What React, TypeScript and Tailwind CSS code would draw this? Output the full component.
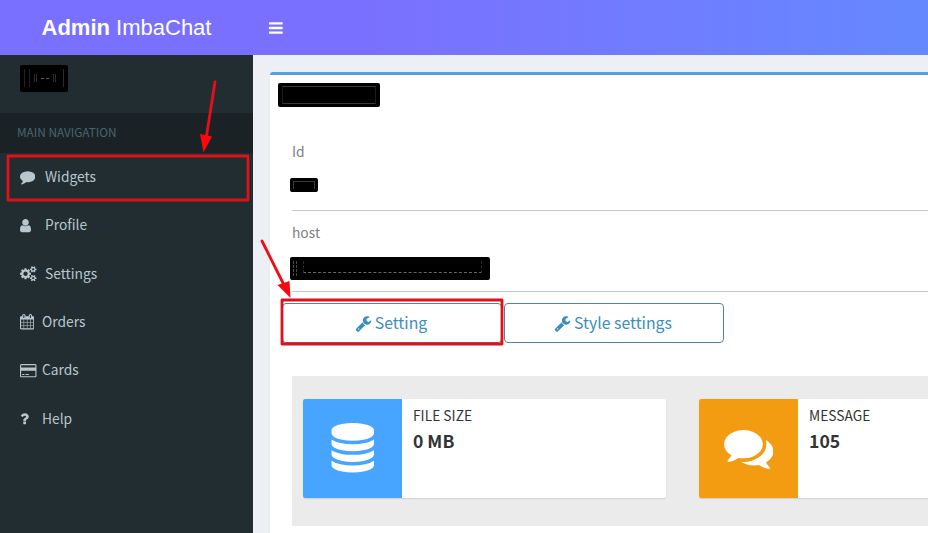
import type { ReactNode } from "react";

const ICONS = {
  bars: "M1664 1344v128q0 26-19 45t-45 19h-1408q-26 0-45-19t-19-45v-128q0-26 19-45t45-19h1408q26 0 45 19t19 45zm0-512v128q0 26-19 45t-45 19h-1408q-26 0-45-19t-19-45v-128q0-26 19-45t45-19h1408q26 0 45 19t19 45zm0-512v128q0 26-19 45t-45 19h-1408q-26 0-45-19t-19-45v-128q0-26 19-45t45-19h1408q26 0 45 19t19 45z",
  comment:
    "M1792 896q0 174-120 321.5t-326 233-450 85.5q-70 0-145-8-198 175-460 242-49 14-114 22-17 2-30.5-9t-17.5-29v-1q-3-4-.5-12t2-10 4.5-9.5l6-9 7-8.5 8-9q7-8 31-34.5t34.5-38 31-39.5 32.5-51 27-59 26-76q-157-89-247.5-220t-90.5-281q0-130 71-248.5t191-204.5 286-136.5 348-50.5 348 50.5 286 136.5 191 204.5 71 248.5z",
  user: "M1536 1399q0 109-62.5 187t-150.5 78h-854q-88 0-150.5-78t-62.5-187q0-85 8.5-160.5t31.5-152 58.5-131 94-89 134.5-34.5q131 128 313 128t313-128q76 0 134.5 34.5t94 89 58.5 131 31.5 152 8.5 160.5zm-256-887q0 159-112.5 271.5t-271.5 112.5-271.5-112.5-112.5-271.5 112.5-271.5 271.5-112.5 271.5 112.5 112.5 271.5z",
  cogs: "M896 896q0-106-75-181t-181-75-181 75-75 181 75 181 181 75 181-75 75-181zm768 512q0-52-38-90t-90-38-90 38-38 90q0 53 37.5 90.5t90.5 37.5 90.5-37.5 37.5-90.5zm0-1024q0-52-38-90t-90-38-90 38-38 90q0 53 37.5 90.5t90.5 37.5 90.5-37.5 37.5-90.5zm-384 421v185q0 10-7 19.5t-16 10.5l-155 24q-11 35-32 76 34 48 90 115 7 11 7 20 0 12-7 19-23 30-82.5 89.5t-78.5 59.5q-11 0-21-7l-115-90q-37 19-77 31-11 108-23 155-7 24-30 24h-186q-11 0-20-7.5t-10-17.5l-23-153q-34-10-75-31l-118 89q-7 7-20 7-11 0-21-8-144-133-144-160 0-9 7-19 10-14 41-53t47-61q-23-44-35-82l-152-24q-10-1-17-9.5t-7-19.5v-185q0-10 7-19.5t16-10.5l155-24q11-35 32-76-34-48-90-115-7-11-7-20 0-12 7-20 22-30 82-89t79-59q11 0 21 7l115 90q34-18 77-32 11-108 23-154 7-24 30-24h186q11 0 20 7.5t10 17.5l23 153q34 10 75 31l118-89q8-7 20-7 11 0 21 8 144 133 144 160 0 8-7 19-12 16-42 54t-45 60q23 48 34 82l152 23q10 2 17 10.5t7 19.5zm640 533v140q0 16-149 31-12 27-30 52 51 113 51 138 0 4-4 7-122 71-124 71-8 0-46-47t-52-68q-20 2-30 2t-30-2q-14 21-52 68t-46 47q-2 0-124-71-4-3-4-7 0-25 51-138-18-25-30-52-149-15-149-31v-140q0-16 149-31 13-29 30-52-51-113-51-138 0-4 4-7 4-2 35-20t59-34 30-16q8 0 46 46.5t52 67.5q20-2 30-2t30 2q51-71 92-112l6-2q4 0 124 70 4 3 4 7 0 25-51 138 17 23 30 52 149 15 149 31zm0-1024v140q0 16-149 31-12 27-30 52 51 113 51 138 0 4-4 7-122 71-124 71-8 0-46-47t-52-68q-20 2-30 2t-30-2q-14 21-52 68t-46 47q-2 0-124-71-4-3-4-7 0-25 51-138-18-25-30-52-149-15-149-31v-140q0-16 149-31 13-29 30-52-51-113-51-138 0-4 4-7 4-2 35-20t59-34 30-16q8 0 46 46.5t52 67.5q20-2 30-2t30 2q51-71 92-112l6-2q4 0 124 70 4 3 4 7 0 25-51 138 17 23 30 52 149 15 149 31z",
  calendar:
    "M192 1664h288v-288h-288v288zm352 0h320v-288h-320v288zm-352-352h288v-320h-288v320zm352 0h320v-320h-320v320zm-352-384h288v-288h-288v288zm736 736h320v-288h-320v288zm-384-736h320v-288h-320v288zm768 736h288v-288h-288v288zm-384-352h320v-320h-320v320zm-352-864v-288q0-13-9.5-22.5t-22.5-9.5h-64q-13 0-22.5 9.5t-9.5 22.5v288q0 13 9.5 22.5t22.5 9.5h64q13 0 22.5-9.5t9.5-22.5zm736 864h288v-320h-288v320zm-384-384h320v-288h-320v288zm384 0h288v-288h-288v288zm32-480v-288q0-13-9.5-22.5t-22.5-9.5h-64q-13 0-22.5 9.5t-9.5 22.5v288q0 13 9.5 22.5t22.5 9.5h64q13 0 22.5-9.5t9.5-22.5zm384-64v1280q0 52-38 90t-90 38h-1408q-52 0-90-38t-38-90v-1280q0-52 38-90t90-38h128v-96q0-66 47-113t113-47h64q66 0 113 47t47 113v96h384v-96q0-66 47-113t113-47h64q66 0 113 47t47 113v96h128q52 0 90 38t38 90z",
  card: "M1760 128q66 0 113 47t47 113v1216q0 66-47 113t-113 47h-1600q-66 0-113-47t-47-113v-1216q0-66 47-113t113-47h1600zm-1600 128q-13 0-22.5 9.5t-9.5 22.5v224h1664v-224q0-13-9.5-22.5t-22.5-9.5h-1600zm1600 1280q13 0 22.5-9.5t9.5-22.5v-608h-1664v608q0 13 9.5 22.5t22.5 9.5h1600zm-1504-128v-128h256v128h-256zm384 0v-128h384v128h-384z",
  question:
    "M1088 1256v240q0 16-12 28t-28 12h-240q-16 0-28-12t-12-28v-240q0-16 12-28t28-12h240q16 0 28 12t12 28zm316-600q0 54-15.5 101t-35 76.5-55 59.5-57.5 43.5-61 35.5q-41 23-68.5 65t-27.5 67q0 17-12 32.5t-28 15.5h-240q-15 0-25.5-18.5t-10.5-37.5v-45q0-83 65-156.5t143-108.5q59-27 84-56t25-76q0-42-46.5-74t-107.5-32q-65 0-108 29-35 25-107 115-13 16-31 16-12 0-25-8l-164-125q-13-10-15.5-25t5.5-28q160-266 464-266 80 0 161 31t146 83 106 127.5 41 158.5z",
  wrench:
    "M448 1472q0-26-19-45t-45-19-45 19-19 45 19 45 45 19 45-19 19-45zm644-420l-682 682q-37 37-90 37-52 0-91-37l-106-108q-38-36-38-90 0-53 38-91l681-681q39 98 114.5 173.5t173.5 114.5zm634-435q0 39-23 106-47 134-164.5 217.5t-258.5 83.5q-185 0-316.5-131.5t-131.5-316.5 131.5-316.5 316.5-131.5q58 0 121.5 16.5t107.5 46.5q16 11 16 28t-16 28l-293 169v224l193 107q5-3 79-48.5t135.5-81 70.5-35.5q15 0 23.5 10t8.5 25z",
  database:
    "M896 768q237 0 443-43t325-127v170q0 69-103 128t-280 93.5-385 34.5-385-34.5-280-93.5-103-128v-170q119 84 325 127t443 43zm0 768q237 0 443-43t325-127v170q0 69-103 128t-280 93.5-385 34.5-385-34.5-280-93.5-103-128v-170q119 84 325 127t443 43zm0-384q237 0 443-43t325-127v170q0 69-103 128t-280 93.5-385 34.5-385-34.5-280-93.5-103-128v-170q119 84 325 127t443 43zm0-1152q208 0 385 34.5t280 93.5 103 128v128q0 69-103 128t-280 93.5-385 34.5-385-34.5-280-93.5-103-128v-128q0-69 103-128t280-93.5 385-34.5z",
  comments:
    "M1408 768q0 139-94 257t-256.5 186.5-353.5 68.5q-86 0-176-16-124 88-278 128-36 9-86 16h-3q-11 0-20.5-8t-11.5-21q-1-3-1-6.5t.5-6.5 2-6l2.5-5 3.5-5.5 4-5 4.5-5 4-4.5q5-6 23-25t26-29.5 22.5-29 25-38.5 20.5-44q-124-72-195-177t-71-224q0-139 94-257t256.5-186.5 353.5-68.5 353.5 68.5 256.5 186.5 94 257zm384 256q0 120-71 224.5t-195 176.5q10 24 20.5 44t25 38.5 22.5 29 26 29.5 23 25q1 1 4 4.5t4.5 5 4 5 3.5 5.5l2.5 5 2 6 .5 6.5-1 6.5q-3 14-13 22t-22 7q-50-7-86-16-154-40-278-128-90 16-176 16-271 0-472-132 58 4 88 4 161 0 309-45t264-129q125-92 192-212t67-254q0-77-23-152 129 71 204 178t75 230z",
};

type IconName = keyof typeof ICONS;

function Icon({ name, box = "0 0 1792 1792", className }: { name: IconName; box?: string; className: string }) {
  return (
    <svg viewBox={box} fill="currentColor" className={`shrink-0 ${className}`} aria-hidden="true">
      <path d={ICONS[name]} />
    </svg>
  );
}

const NAV: { label: string; icon: IconName; box?: string; size: string; slot: string }[] = [
  { label: "Widgets", icon: "comment", size: "w-[15.4px] h-[15.4px]", slot: "w-[25px]" },
  { label: "Profile", icon: "user", box: "256 0 1280 1792", size: "w-[11px] h-[15.4px]", slot: "w-[25px]" },
  { label: "Settings", icon: "cogs", box: "0 0 1920 1792", size: "w-[16.5px] h-[15.4px]", slot: "w-[25px]" },
  { label: "Orders", icon: "calendar", box: "64 0 1664 1792", size: "w-[14.3px] h-[15.4px]", slot: "w-[22px]" },
  { label: "Cards", icon: "card", box: "0 0 1920 1792", size: "w-[16.5px] h-[15.4px]", slot: "w-[22px]" },
  { label: "Help", icon: "question", box: "384 0 1024 1792", size: "w-[8.8px] h-[15.4px]", slot: "w-[22px]" },
];

function Field({ label, children }: { label: string; children: ReactNode }) {
  return (
    <div className="h-[81px] border-b border-[#c3c8cc] pt-[11px]">
      <div className="flex h-[22px] items-center text-[13.8px] leading-none text-[#808080]">{label}</div>
      {children}
    </div>
  );
}

function OutlineButton({ children }: { children: ReactNode }) {
  return (
    <button className="flex h-10 w-[220px] items-center justify-center gap-[3px] rounded-[4px] border border-[#4a86a6] bg-white pr-[2px] text-[15.8px] leading-none text-[#3c8dbc]">
      <Icon name="wrench" className="h-[17px] w-[17px]" />
      <span className="h-[17px] leading-[16px]">{children}</span>
    </button>
  );
}

function InfoBox({ icon, color, label, value }: { icon: IconName; color: string; label: string; value: string }) {
  return (
    <div className="flex h-[99px] w-[363px] shrink-0 rounded-[2px] bg-white shadow-[0_1px_1px_rgba(0,0,0,0.12)]">
      <div className={`flex w-[99px] items-center justify-center rounded-l-[2px] pb-[1px] text-white ${color}`}>
        <Icon name={icon} className="h-[49.5px] w-[49.5px]" />
      </div>
      <div className="flex flex-col pt-[5px] pl-[11px] text-[#333]">
        <span className="text-[13.8px] leading-[22px]">{label}</span>
        <span className="text-[17.6px] leading-[30px] font-bold">{value}</span>
      </div>
    </div>
  );
}

function Annotations() {
  return (
    <svg className="pointer-events-none absolute inset-0" width="928" height="533" viewBox="0 0 928 533" fill="none">
      <g stroke="#df1118" strokeWidth="2.8" strokeLinejoin="round">
        <rect x="8" y="156" width="240" height="44" />
        <rect x="282" y="300" width="220" height="44" />
      </g>
      <g stroke="#e80f16" strokeWidth="2.8" strokeLinecap="round">
        <path d="M215 82 206.500 136" />
        <path d="M262 241 283.500 284" />
      </g>
      <g fill="#f60a10">
        <path d="M200 134 212 136.500 203.500 152.500z" />
        <path d="M277.500 285 289.500 281 290.500 298z" />
      </g>
    </svg>
  );
}

export default function App() {
  return (
    <div className="relative flex h-[533px] w-[928px] flex-col overflow-hidden bg-[#ecf0f5] font-['Noto_Sans_CJK_JP','Noto_Sans',sans-serif]">
      <header className="flex h-[55px] shrink-0 bg-linear-to-r from-[#7a70ff] from-40% to-[#6488ff] text-white">
        <div className="flex w-[253px] items-center justify-center font-['Liberation_Sans',Arial,sans-serif] text-[22px]">
          <span className="whitespace-pre">
            <b>Admin</b> ImbaChat
          </span>
        </div>
        <div className="flex items-center pl-[16px]">
          <Icon name="bars" box="128 0 1536 1792" className="h-[16px] w-[13.700px]" />
        </div>
      </header>

      <div className="flex min-h-0 flex-1">
        <aside className="flex w-[253px] shrink-0 flex-col bg-[#222d32] text-[#b8c7ce]">
          <div className="h-[58px] pt-[9.500px] pl-[20px]">
            <div className="flex h-[27px] w-[48px] items-center justify-between rounded-[2px] bg-black px-1">
              <div className="h-[18px] w-[6px] border-x border-[#232323]" />
              <div className="h-[8px] w-[3px] border-x border-[#2c2c2c]" />
              <div className="w-[8px] border-t border-dashed border-[#5a5a5a]" />
              <div className="h-[8px] w-[3px] border-x border-[#2c2c2c]" />
              <div className="h-[18px] w-[4px] border-r border-[#2c2c2c]" />
            </div>
          </div>
          <div className="flex h-[40px] items-center bg-[#1a2226] pb-[2px] pl-[17px] text-[11.8px] leading-none text-[#4b646f]">
            MAIN NAVIGATION
          </div>
          <nav className="-mt-[0.4px] flex flex-col">
            {NAV.map((item) => (
              <a key={item.label} className="flex h-[48.400px] items-center pl-[20px] text-[13.8px] leading-none">
                <span className={`flex ${item.slot}`}>
                  <Icon name={item.icon} box={item.box} className={item.size} />
                </span>
                {item.label}
              </a>
            ))}
          </nav>
        </aside>

        <main className="min-w-0 flex-1 pt-[17px] pl-[17px]">
          <section className="h-full rounded-tl-[3px] border-t-[3px] border-[#559fe4] bg-white pt-[8px] shadow-[0_1px_1px_rgba(0,0,0,0.1)]">
            <div className="ml-[8px] h-[24px] w-[102px] rounded-[2px] bg-black px-[4px] py-[3px]">
              <div className="h-full border border-x-[#1c1c1c] border-y-[#3a3a3a]" />
            </div>
            <div className="mt-[23px] ml-[22px]">
              <Field label="Id">
                <div className="mt-[15px] -ml-[2px] h-[14px] w-[28px] rounded-[2px] bg-black p-[3px]">
                  <div className="h-full border border-b-0 border-[#3a3a3a]" />
                </div>
              </Field>
              <Field label="host">
                <div className="mt-[13px] -ml-[2px] flex h-[23px] w-[200px] gap-[6px] rounded-[2px] bg-black px-[3px] py-[4px]">
                  <div className="w-[4px] border-x border-dashed border-[#4a4a4a]" />
                  <div className="mb-[3px] w-[179px] border-x border-b border-dashed border-x-[#2c2c2c] border-b-[#666]" />
                </div>
              </Field>
            </div>
            <div className="mt-[11px] ml-[12px] flex gap-[2px]">
              <OutlineButton>Setting</OutlineButton>
              <OutlineButton>Style settings</OutlineButton>
            </div>
            <div className="mt-[33px] ml-[22px] flex h-[150px] gap-[33px] overflow-hidden bg-[#ebebeb] pt-[23px] pl-[11px]">
              <InfoBox icon="database" color="bg-[#48a5ff]" label="FILE SIZE" value="0 MB" />
              <InfoBox icon="comments" color="bg-[#f39c12]" label="MESSAGE" value="105" />
            </div>
          </section>
        </main>
      </div>
      <Annotations />
    </div>
  );
}
